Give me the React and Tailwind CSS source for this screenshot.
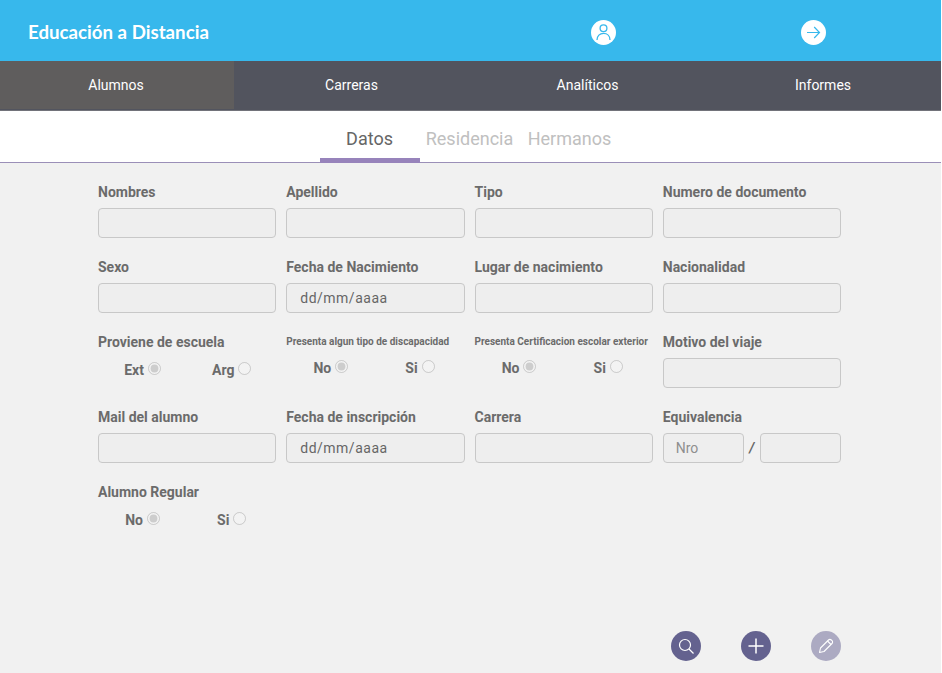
import React from "react";

const labelCls = "block h-[16px] text-[14px] leading-[16px] font-bold text-[#6b6b6b] whitespace-nowrap";
const inputCls = "block w-full h-[30px] rounded-[4px] border border-[#c8c8c8] bg-[#eeeeee] outline-none";

function Field({ label, type }) {
  return (
    <div className="flex flex-col gap-[8px] h-[75px]">
      <label className={labelCls}>{label}</label>
      {type === "date" ? (
        <div className={inputCls + " flex items-center pl-[13px] text-[14px] tracking-[0.5px] text-[#666666]"}>dd/mm/aaaa</div>
      ) : (
        <input className={inputCls} readOnly />
      )}
    </div>
  );
}

function RadioField({ label, small, a, b, name }) {
  return (
    <div className="flex flex-col h-[75px]">
      <label className={small ? "block h-[16px] text-[10px] leading-[16px] font-bold text-[#6b6b6b] whitespace-nowrap" : labelCls}>{label}</label>
      <div className={"grid grid-cols-2 " + (small ? "mt-[10px]" : "mt-[12px]")}>
        {[a, b].map((t, i) => (
          <div key={t} className="flex justify-center items-start h-[16px]">
            <span className="text-[14px] leading-[16px] font-bold text-[#6b6b6b]">{t}</span>
            <input type="radio" name={name} defaultChecked={i === 0} disabled className="ml-[4px] mt-[0px] w-[13px] h-[13px]" />
          </div>
        ))}
      </div>
    </div>
  );
}

function Circle({ children, faded }) {
  return (
    <button className={"flex items-center justify-center w-[30px] h-[30px] rounded-full text-white " + (faded ? "bg-[#acaac2]" : "bg-[#64628f]")}>
      {children}
    </button>
  );
}

export default function App() {
  return (
    <div className="flex flex-col h-[673px] w-[941px] bg-[#f1f1f1] font-['Roboto',sans-serif] overflow-hidden">
      <header className="grid grid-cols-[1fr_210px_210px] items-center h-[61px] pt-[4px] pr-[23px] bg-[#37b8ec] shrink-0">
        <h1 className="pl-[28px] text-[18.7px] font-bold text-white font-['Lato',sans-serif]">Educación a Distancia</h1>
        <div className="flex justify-center">
          <svg width="25" height="25" viewBox="0 0 25 25">
            <circle cx="12.5" cy="12.5" r="12.5" fill="#ffffff" />
            <circle cx="12.5" cy="8.2" r="3.4" fill="none" stroke="#37b8ec" strokeWidth="1.3" />
            <path d="M6 20c0-4.2 2.8-6.6 6.5-6.6S19 15.800 19 20" fill="none" stroke="#37b8ec" strokeWidth="1.3" />
          </svg>
        </div>
        <div className="flex justify-center">
          <svg width="25" height="25" viewBox="0 0 25 25">
            <circle cx="12.5" cy="12.5" r="12.5" fill="#ffffff" />
            <path d="M6 12.5h12.500M13.200 7l5.300 5.500-5.300 5.500" fill="none" stroke="#37b8ec" strokeWidth="1.200" />
          </svg>
        </div>
      </header>

      <nav className="grid grid-cols-[234px_235px_237px_1fr] h-[50px] shrink-0 bg-[#52545e] border-b border-[#72737a] pb-[1px] text-[14px] text-white">
        <div className="flex items-center justify-center pr-[2px] bg-[#5f5d5d]">Alumnos</div>
        <div className="flex items-center justify-center">Carreras</div>
        <div className="flex items-center justify-center">Analíticos</div>
        <div className="flex items-center justify-center pr-[1px]">Informes</div>
      </nav>

      <div className="flex justify-center h-[52px] shrink-0 bg-white border-b border-[#9b8fb8] text-[18px] pt-[1px] pr-[2px]">
        <div className="w-[100px] h-[51px] flex justify-center pt-[15px] leading-[24px] text-[#666666] border-b-[5px] border-[#9783bb]">Datos</div>
        <div className="w-[100px] flex justify-center pt-[15px] leading-[24px] text-[#c0c0c0]">Residencia</div>
        <div className="w-[100px] flex justify-center pt-[15px] leading-[24px] text-[#c0c0c0]">Hermanos</div>
      </div>

      <main className="grid grid-cols-4 gap-x-[10px] ml-[98px] w-[743px] pt-[21px]">
        <Field label="Nombres" />
        <Field label="Apellido" />
        <Field label="Tipo" />
        <Field label="Numero de documento" />
        <Field label="Sexo" />
        <Field label="Fecha de Nacimiento" type="date" />
        <Field label="Lugar de nacimiento" />
        <Field label="Nacionalidad" />
        <RadioField label="Proviene de escuela" a="Ext" b="Arg" name="r1" />
        <RadioField small label="Presenta algun tipo de discapacidad" a="No" b="Si" name="r2" />
        <RadioField small label="Presenta Certificacion escolar exterior" a="No" b="Si" name="r3" />
        <Field label="Motivo del viaje" />
        <Field label="Mail del alumno" />
        <Field label="Fecha de inscripción" type="date" />
        <Field label="Carrera" />
        <div className="flex flex-col gap-[8px] h-[75px]">
          <label className={labelCls}>Equivalencia</label>
          <div className="flex items-center justify-between">
            <div className={inputCls + " !w-[81px] flex items-center pl-[12px] text-[14px] text-[#8f8f8f]"}>Nro</div>
            <span className="text-[14px] italic font-bold text-[#666666]">/</span>
            <input className={inputCls + " !w-[81px]"} readOnly />
          </div>
        </div>
        <RadioField label="Alumno Regular" a="No" b="Si" name="r4" />
      </main>

      <div className="mt-auto mb-[12px] ml-[671px] flex gap-[40px]">
        <Circle>
          <svg width="18" height="18" viewBox="0 0 18 18" fill="none" stroke="#ffffff" strokeWidth="1.2">
            <circle cx="8" cy="8" r="5.5" />
            <path d="M12 12L16.500 16.500" />
          </svg>
        </Circle>
        <Circle>
          <svg width="18" height="18" viewBox="0 0 18 18" fill="none" stroke="#ffffff" strokeWidth="1.5">
            <path d="M9 1.500v15M1.500 9h15" />
          </svg>
        </Circle>
        <Circle faded>
          <svg width="16" height="16" viewBox="0 0 16 16" fill="none" stroke="#ffffff" strokeWidth="1.100" strokeLinejoin="round">
            <path d="M1.500 14.500l1-4.500L10.500 2c.8-.8 2-.8 2.800 0l.7.7c.8.8.8 2 0 2.800L6 13.500z" />
            <path d="M9.500 3l3.500 3.500" />
          </svg>
        </Circle>
      </div>
    </div>
  );
}
